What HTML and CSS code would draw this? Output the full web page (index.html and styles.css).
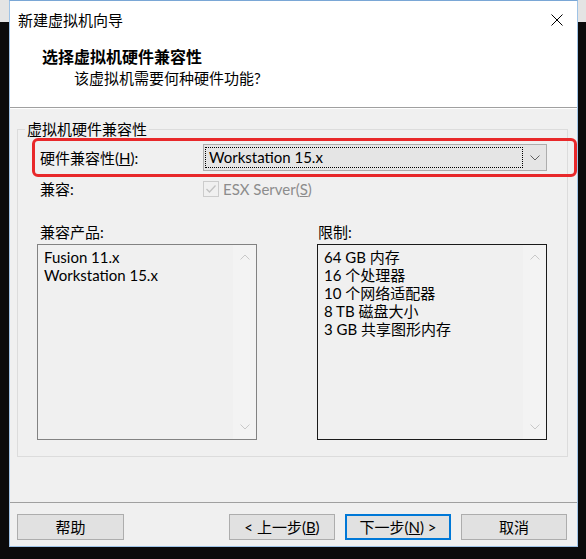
FILE: index.html
```html
<!DOCTYPE html>
<html lang="zh-CN">
<head>
    <meta charset="UTF-8">
    <title>新建虚拟机向导</title>
    <link rel="stylesheet" href="styles.css">
</head>
<body>
    <div class="window">
        <div class="titlebar">
            <span class="title">新建虚拟机向导</span>
            <svg class="close" width="12" height="12" viewBox="0 0 12 12">
                <path d="M0.5 0.5 L11.5 11.5 M11.5 0.5 L0.5 11.5" stroke="#000" stroke-width="1" fill="none"/>
            </svg>
        </div>
        <div class="header">
            <div class="heading">选择虚拟机硬件兼容性</div>
            <div class="subheading">该虚拟机需要何种硬件功能?</div>
        </div>
        <div class="content">
            <div class="group">
                <div class="group-title">虚拟机硬件兼容性</div>
                <div class="row row-combo">
                    <span class="field-label">硬件兼容性(<u>H</u>):</span>
                    <div class="combo">
                        <span class="combo-value">Workstation 15.x</span>
                        <span class="combo-arrow">
                            <svg width="10" height="6" viewBox="0 0 10 6">
                                <path d="M0.5 0.5 L5 5 L9.5 0.5" stroke="#606060" stroke-width="1" fill="none"/>
                            </svg>
                        </span>
                    </div>
                </div>
                <div class="row row-check">
                    <span class="field-label">兼容:</span>
                    <span class="checkbox">
                        <svg width="14" height="14" viewBox="0 0 14 14">
                            <path d="M2.5 7 L5.5 10 L11.5 3.5" stroke="#c2c2c2" stroke-width="1.3" fill="none"/>
                        </svg>
                    </span>
                    <span class="check-text">ESX Server(<u>S</u>)</span>
                </div>
                <div class="lists">
                    <div class="list-col list-products">
                        <div class="list-title">兼容产品:</div>
                        <div class="listbox">
                            <ul class="list-items">
                                <li>Fusion 11.x</li>
                                <li>Workstation 15.x</li>
                            </ul>
                            <div class="scrollbar">
                                <svg width="10" height="6" viewBox="0 0 10 6"><path d="M0.5 5.5 L5 1 L9.5 5.5" stroke="#c8c8c8" fill="none"/></svg>
                                <svg width="10" height="6" viewBox="0 0 10 6"><path d="M0.5 0.5 L5 5 L9.5 0.5" stroke="#c8c8c8" fill="none"/></svg>
                            </div>
                        </div>
                    </div>
                    <div class="list-col list-limits">
                        <div class="list-title">限制:</div>
                        <div class="listbox listbox-focus">
                            <ul class="list-items">
                                <li>64 GB 内存</li>
                                <li>16 个处理器</li>
                                <li>10 个网络适配器</li>
                                <li>8 TB 磁盘大小</li>
                                <li>3 GB 共享图形内存</li>
                            </ul>
                            <div class="scrollbar">
                                <svg width="10" height="6" viewBox="0 0 10 6"><path d="M0.5 5.5 L5 1 L9.5 5.5" stroke="#c8c8c8" fill="none"/></svg>
                                <svg width="10" height="6" viewBox="0 0 10 6"><path d="M0.5 0.5 L5 5 L9.5 0.5" stroke="#c8c8c8" fill="none"/></svg>
                            </div>
                        </div>
                    </div>
                </div>
            </div>
        </div>
        <div class="footer">
            <button class="btn btn-help">帮助</button>
            <button class="btn">&lt; 上一步(<u>B</u>)</button>
            <button class="btn btn-default">下一步(<u>N</u>) &gt;</button>
            <button class="btn">取消</button>
        </div>
        <!-- red annotation frame drawn over the compatibility row -->
        <div class="highlight"></div>
    </div>
</body>
</html>
```

FILE: styles.css
```css
body {
    margin: 0;
    width: 586px;
    height: 559px;
    overflow: hidden;
    background: linear-gradient(to bottom, #e4e4e4 0, #e4e4e4 22px, #0b0b0b 22px);
    font-family: Lato, "Noto Sans CJK SC", sans-serif;
    font-size: 15px;
    color: #000;
}
.window {
    position: relative;
    margin-left: 9px;
    width: 569px;
    height: 547px;
    box-sizing: border-box;
    border: 1px solid #9fc3e6;
    border-top-color: #7aa7d6;
    background: #f0f0f0;
    display: flex;
    flex-direction: column;
}
.titlebar {
    height: 37px;
    background: #fff;
    display: flex;
    align-items: center;
    justify-content: space-between;
    padding: 0 14px 0 8px;
}
.title {
    line-height: 20px;
}
.close {
    display: block;
    margin-top: 1px;
}
.header {
    height: 70px;
    background: #fff;
    box-sizing: border-box;
    padding: 9px 0 0 32px;
    border-bottom: 1px solid #a0a0a0;
}
.heading {
    font-weight: bold;
    font-size: 16px;
    line-height: 20px;
}
.subheading {
    line-height: 22px;
    padding-left: 32px;
}
.content {
    border-top: 1px solid #fff;
}
.group {
    margin: 20px 9px 0 7px;
    border: 1px solid #dcdcdc;
    padding: 0 19px 16px;
}
.group-title {
    display: table;
    margin: -11px 0 0 -12px;
    padding: 0 2px;
    line-height: 20px;
    background: #f0f0f0;
}
.row {
    display: flex;
    align-items: center;
}
.field-label {
    width: 163px;
    margin-left: 3px;
    line-height: 20px;
}
.row-combo {
    margin-top: 5px;
}
.combo {
    width: 344px;
    height: 27px;
    box-sizing: border-box;
    border: 1px solid #adadad;
    background: #e5e5e5;
    display: flex;
}
.combo-value {
    flex: 1;
    margin: 2px 0 2px 1px;
    border: 1px dotted #000;
    padding-left: 3px;
    line-height: 19px;
}
.combo-arrow {
    width: 23px;
    display: flex;
    align-items: center;
    justify-content: center;
}
.row-check {
    margin-top: 10px;
    height: 16px;
}
.checkbox {
    width: 16px;
    height: 16px;
    box-sizing: border-box;
    border: 1px solid #cccccc;
    background: #f0f0f0;
    display: flex;
    align-items: center;
    justify-content: center;
}
.check-text {
    margin-left: 4px;
    color: #8c8c8c;
    line-height: 16px;
}
.lists {
    display: flex;
    gap: 60px;
    margin-top: 25px;
}
.list-products {
    width: 220px;
}
.list-limits {
    width: 230px;
}
.list-title {
    line-height: 20px;
}
.list-products .list-title {
    padding-left: 3px;
}
.list-limits .list-title {
    padding-left: 1px;
}
.listbox {
    margin-top: 2px;
    height: 196px;
    box-sizing: border-box;
    border: 1px solid #828282;
    display: flex;
}
.listbox-focus {
    border-color: #1a1a1a;
}
.list-items {
    flex: 1;
    margin: 0;
    padding: 3px 0 0 6px;
    list-style: none;
}
.list-items li {
    line-height: 18px;
    white-space: nowrap;
}
.scrollbar {
    width: 23px;
    background: #f3f3f3;
    display: flex;
    flex-direction: column;
    align-items: center;
    justify-content: space-between;
    padding: 9px 0 9px;
}
.footer {
    margin-top: auto;
    border-top: 1px solid #a0a0a0;
    padding: 11px 10px 6px 7px;
    display: flex;
    gap: 10px;
}
.btn {
    width: 106px;
    height: 26px;
    box-sizing: border-box;
    border: 1px solid #adadad;
    background: #e1e1e1;
    font-family: inherit;
    font-size: 15px;
    line-height: 22px;
    padding: 0;
    color: #000;
}
.btn-help {
    width: 107px;
    margin-right: auto;
}
.btn-default {
    border: 2px solid #0078d7;
}
.highlight {
    position: absolute;
    left: 22px;
    top: 137px;
    width: 545px;
    height: 39px;
    box-sizing: border-box;
    border: 3px solid #e8282a;
    border-radius: 6px;
}
```
